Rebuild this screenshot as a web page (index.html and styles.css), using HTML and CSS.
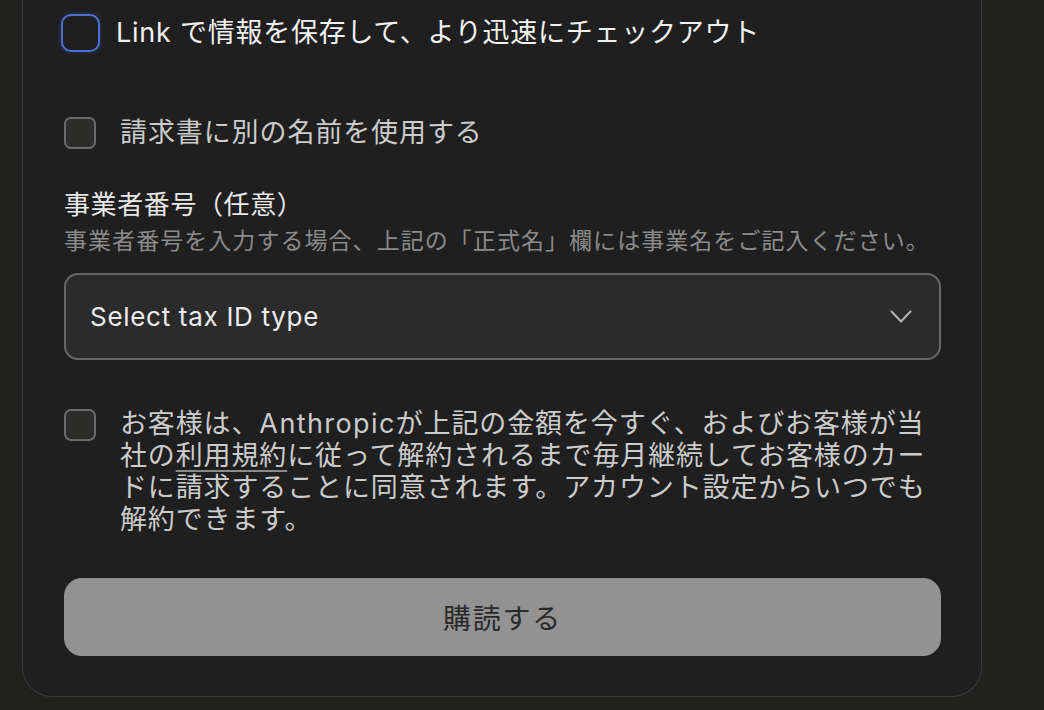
FILE: index.html
```html
<!DOCTYPE html>
<html lang="ja">
<head>
<meta charset="utf-8">
<title>購読</title>
<link rel="stylesheet" href="styles.css">
</head>
<body>
<div class="card">
  <label class="row row-link">
    <span class="box box-focus"></span>
    <span class="link-text">Link で情報を保存して、より迅速にチェックアウト</span>
  </label>

  <label class="row row-alt">
    <span class="box"></span>
    <span class="label-text">請求書に別の名前を使用する</span>
  </label>

  <div class="field">
    <div class="field-title">事業者番号（任意）</div>
    <div class="field-help">事業者番号を入力する場合、上記の「正式名」欄には事業名をご記入ください。</div>
    <div class="select">
      <span class="select-text">Select tax ID type</span>
      <svg class="chevron" width="22" height="14" viewBox="0 0 22 14"><path d="M1.5 1.5 L11 11.5 L20.5 1.5" fill="none" stroke="#b3b3b3" stroke-width="2" stroke-linecap="round" stroke-linejoin="round"/></svg>
    </div>
  </div>

  <label class="row row-terms">
    <span class="box box-top"></span>
    <span class="terms">お客様は、<span class="latin">Anthropic</span>が上記の金額を今すぐ、およびお客様が当<br>社の<span class="ul">利用規約</span>に従って解約されるまで毎月継続してお客様のカー<br>ドに請求することに同意されます。アカウント設定からいつでも<br>解約できます。</span>
  </label>

  <button class="submit">購読する</button>
</div>
</body>
</html>
```

FILE: styles.css
```css
html, body {
  margin: 0;
  padding: 0;
  background: #212120;
}
body {
  font-family: "Inter", "Noto Sans CJK JP", sans-serif;
  width: 1044px;
  height: 710px;
  overflow: hidden;
}
.card {
  margin-left: 22px;
  width: 960px;
  box-sizing: border-box;
  background: #1f1f1f;
  border: 1.5px solid #3a3a3a;
  border-top: none;
  border-radius: 0 0 30px 30px;
  padding: 14px 40px 40px 41px;
  display: flex;
  flex-direction: column;
}
.row {
  display: flex;
  align-items: center;
}
.box {
  flex: none;
  width: 32px;
  height: 32px;
  box-sizing: border-box;
  border: 2px solid #696969;
  background: #2c2c2b;
  border-radius: 7px;
}
.row-link {
  height: 38px;
  margin-left: -3px;
}
.box-focus {
  width: 39px;
  height: 38px;
  border: 2.5px solid #4a70d2;
  background: #1e1e1e;
  border-radius: 10px;
  box-shadow: 0 0 5px rgba(70, 110, 220, 0.35);
}
.link-text {
  margin-left: 16px;
  font-size: 27px;
  letter-spacing: 0.75px;
  color: #f2f2f2;
  line-height: 38px;
}
.row-alt {
  margin-top: 65px;
  height: 32px;
}
.label-text {
  margin-left: 24px;
  font-size: 27px;
  letter-spacing: 0.9px;
  color: #cbcbcb;
  line-height: 32px;
}
.field {
  margin-top: 38px;
  display: flex;
  flex-direction: column;
}
.field-title {
  font-size: 26px;
  letter-spacing: 0.6px;
  line-height: 36px;
  color: #e8e8e8;
}
.field-help {
  margin-top: 2px;
  font-size: 23px;
  letter-spacing: 1.05px;
  line-height: 32px;
  color: #8b8b8b;
}
.select {
  margin-top: 16px;
  height: 87px;
  box-sizing: border-box;
  border: 2px solid #676767;
  background: #2b2b2b;
  border-radius: 14px;
  display: flex;
  align-items: center;
  justify-content: space-between;
  padding: 0 27px 0 24px;
}
.select-text {
  font-size: 26px;
  letter-spacing: 0.7px;
  color: #ececec;
}
.chevron {
  display: block;
}
.row-terms {
  margin-top: 48px;
  align-items: flex-start;
}
.box-top {
  margin-top: 1px;
}
.terms {
  margin-left: 24px;
  font-size: 27px;
  letter-spacing: 0.87px;
  line-height: 32px;
  color: #cbcbcb;
  white-space: nowrap;
}
.latin {
  letter-spacing: 1.4px;
}
.ul {
  text-decoration: underline;
  text-decoration-color: #8a8a8a;
  text-decoration-thickness: 1.5px;
  text-underline-offset: 5px;
}
.submit {
  margin-top: 42px;
  height: 78px;
  width: 100%;
  border: none;
  border-radius: 18px;
  background: #929292;
  color: #2a2a2a;
  font-family: "Inter", "Noto Sans CJK JP", sans-serif;
  font-size: 28px;
  letter-spacing: 1.8px;
  padding: 0;
}
```
